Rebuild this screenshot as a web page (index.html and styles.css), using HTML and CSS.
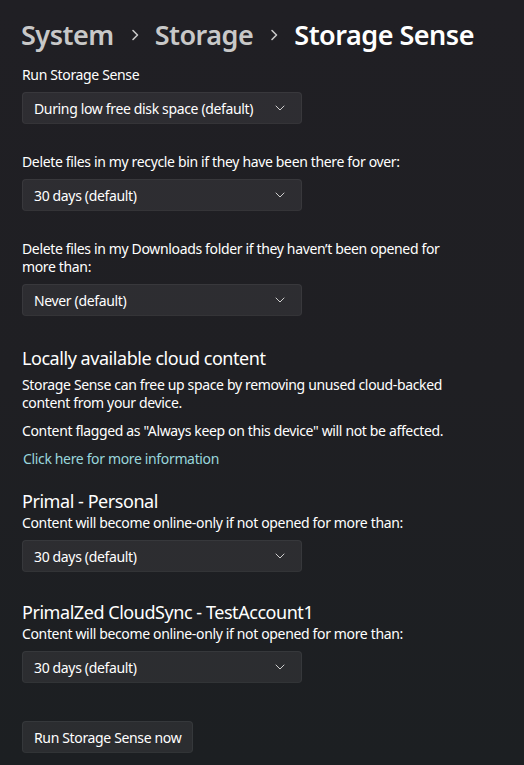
FILE: index.html
```html
<!DOCTYPE html>
<html>
<head>
<meta charset="utf-8">
<link rel="stylesheet" href="styles.css">
</head>
<body>
<div class="page">
  <h1 class="crumbs">
    <span class="crumb">System</span>
    <svg class="sep" width="10" height="14" viewBox="0 0 10 14"><path d="M3 2.5 L7.5 7 L3 11.5" fill="none" stroke="currentColor" stroke-width="1.6" stroke-linecap="round" stroke-linejoin="round"/></svg>
    <span class="crumb">Storage</span>
    <svg class="sep" width="10" height="14" viewBox="0 0 10 14"><path d="M3 2.5 L7.5 7 L3 11.5" fill="none" stroke="currentColor" stroke-width="1.6" stroke-linecap="round" stroke-linejoin="round"/></svg>
    <span class="crumb current">Storage Sense</span>
  </h1>

  <div class="group">
    <div class="label">Run Storage Sense</div>
    <div class="combo"><span>During low free disk space (default)</span><svg class="chev" width="10" height="6" viewBox="0 0 10 6"><path d="M1 1 L5 5 L9 1" fill="none" stroke="currentColor" stroke-width="1" stroke-linecap="round" stroke-linejoin="round"/></svg></div>
  </div>

  <div class="group">
    <div class="label">Delete files in my recycle bin if they have been there for over:</div>
    <div class="combo"><span>30 days (default)</span><svg class="chev" width="10" height="6" viewBox="0 0 10 6"><path d="M1 1 L5 5 L9 1" fill="none" stroke="currentColor" stroke-width="1" stroke-linecap="round" stroke-linejoin="round"/></svg></div>
  </div>

  <div class="group">
    <div class="label">Delete files in my Downloads folder if they haven’t been opened for<br>more than:</div>
    <div class="combo"><span>Never (default)</span><svg class="chev" width="10" height="6" viewBox="0 0 10 6"><path d="M1 1 L5 5 L9 1" fill="none" stroke="currentColor" stroke-width="1" stroke-linecap="round" stroke-linejoin="round"/></svg></div>
  </div>

  <section class="cloud">
    <h2 class="heading">Locally available cloud content</h2>
    <p class="text">Storage Sense can free up space by removing unused cloud-backed<br>content from your device.</p>
    <p class="text">Content flagged as "Always keep on this device" will not be affected.</p>
    <a class="link">Click here for more information</a>
  </section>

  <section class="provider first">
    <h2 class="heading">Primal - Personal</h2>
    <div class="label">Content will become online-only if not opened for more than:</div>
    <div class="combo"><span>30 days (default)</span><svg class="chev" width="10" height="6" viewBox="0 0 10 6"><path d="M1 1 L5 5 L9 1" fill="none" stroke="currentColor" stroke-width="1" stroke-linecap="round" stroke-linejoin="round"/></svg></div>
  </section>

  <section class="provider">
    <h2 class="heading">PrimalZed CloudSync - TestAccount1</h2>
    <div class="label">Content will become online-only if not opened for more than:</div>
    <div class="combo"><span>30 days (default)</span><svg class="chev" width="10" height="6" viewBox="0 0 10 6"><path d="M1 1 L5 5 L9 1" fill="none" stroke="currentColor" stroke-width="1" stroke-linecap="round" stroke-linejoin="round"/></svg></div>
  </section>

  <button class="btn">Run Storage Sense now</button>
</div>
</body>
</html>
```

FILE: styles.css
```css
html, body {
  margin: 0;
  padding: 0;
}
body {
  width: 524px;
  height: 765px;
  overflow: hidden;
  background: linear-gradient(180deg, #201f24 0%, #1f1f23 50%, #1c1f22 100%);
  color: #ffffff;
  font-family: "Segoe UI", "Noto Sans", "Open Sans", sans-serif;
  font-size: 14px;
  letter-spacing: -0.35px;
  white-space: nowrap;
}
.page {
  padding: 17px 0 0 21px;
}
.crumbs {
  margin: 0;
  display: flex;
  align-items: center;
  font-size: 27px;
  font-weight: 600;
  line-height: 36px;
  height: 36px;
  letter-spacing: -0.5px;
}
.crumb {
  color: #c8c8c8;
  margin-top: 0;
}
.crumb.current {
  color: #ffffff;
}
.sep {
  color: #c8c8c8;
  margin: 0 15px 0 16px;
}
.group {
  margin-top: 13px;
  padding-left: 1px;
}
.group + .group {
  margin-top: 29px;
}
.label {
  line-height: 18px;
  color: #ffffff;
  margin-bottom: 8px;
}
.combo {
  box-sizing: border-box;
  width: 280px;
  height: 32px;
  display: flex;
  align-items: center;
  justify-content: space-between;
  padding: 0 16px 0 11px;
  background: rgba(255, 255, 255, 0.065);
  border: 1px solid rgba(255, 255, 255, 0.05);
  border-bottom-color: rgba(255, 255, 255, 0.03);
  border-radius: 4px;
  color: #ffffff;
}
.chev {
  color: #cfcfcf;
}
.cloud {
  margin-top: 28px;
  padding-left: 1px;
}
.heading {
  margin: 0;
  font-size: 18px;
  font-weight: 400;
  line-height: 28px;
  letter-spacing: -0.45px;
}
.text {
  margin: 4px 0 0 0;
  line-height: 18px;
}
.text + .text {
  margin-top: 10px;
}
.link {
  display: block;
  margin-top: 10px;
  line-height: 18px;
  color: #99d6dc;
  padding-left: 1px;
}
.provider {
  margin-top: 27px;
  padding-left: 1px;
}
.provider.first {
  margin-top: 20px;
}
.provider .heading {
  line-height: 26px;
}
.btn {
  display: block;
  box-sizing: border-box;
  margin: 38px 0 0 1px;
  height: 32px;
  padding: 0 11px;
  font-family: inherit;
  font-size: 14px;
  letter-spacing: -0.35px;
  color: #ffffff;
  background: rgba(255, 255, 255, 0.065);
  border: 1px solid rgba(255, 255, 255, 0.05);
  border-bottom-color: rgba(255, 255, 255, 0.03);
  border-radius: 4px;
}
```
